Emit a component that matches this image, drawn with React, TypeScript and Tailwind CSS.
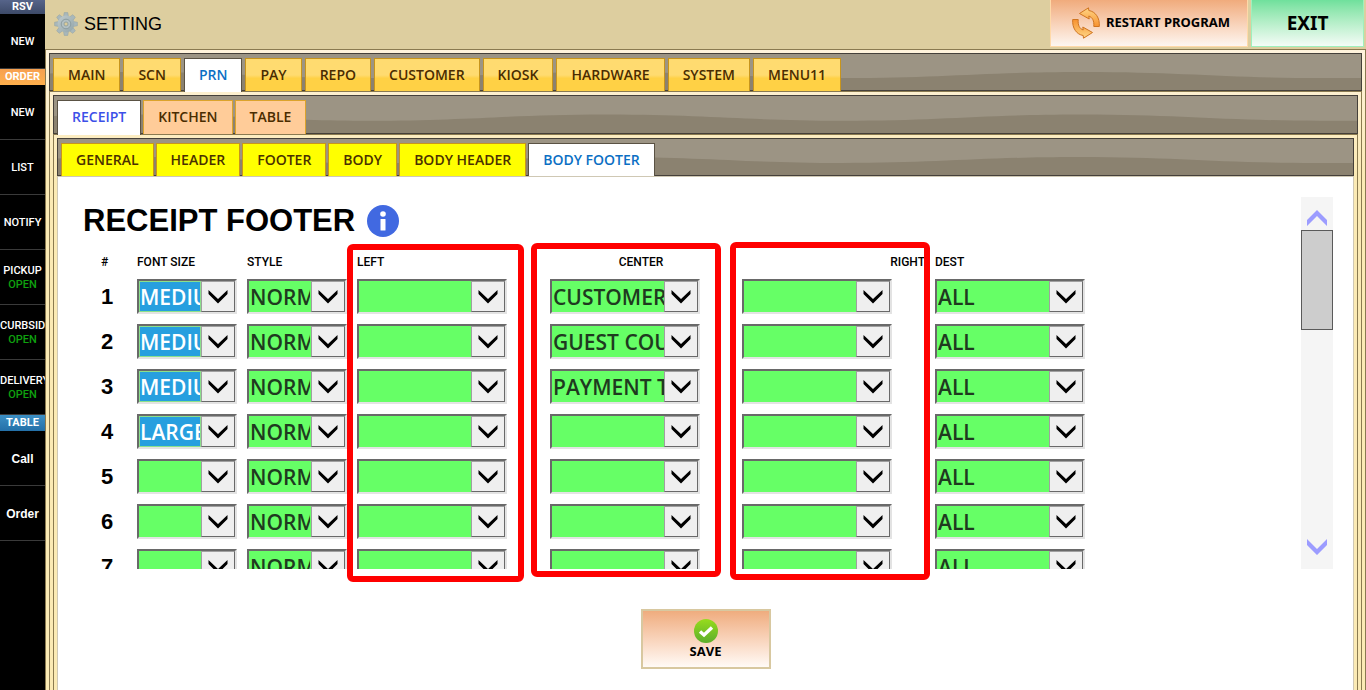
import React from 'react';

type Level = 'main' | 'sub' | 'leaf';

interface TabBarProps {
  level: Level;
  tabs: string[];
  active: string;
}

interface ComboProps {
  label: string;
  value?: string;
  wide?: boolean;
  selected?: boolean;
}

const mainTabs = ['MAIN', 'SCN', 'PRN', 'PAY', 'REPO', 'CUSTOMER', 'KIOSK', 'HARDWARE', 'SYSTEM', 'MENU11'];
const subTabs = ['RECEIPT', 'KITCHEN', 'TABLE'];
const leafTabs = ['GENERAL', 'HEADER', 'FOOTER', 'BODY', 'BODY HEADER', 'BODY FOOTER'];

const rows = [
  { size: 'MEDIUM', center: 'CUSTOMER' },
  { size: 'MEDIUM', center: 'GUEST COUNT' },
  { size: 'MEDIUM', center: 'PAYMENT TYPE' },
  { size: 'LARGE', center: '' },
  { size: '', center: '' },
  { size: '', center: '' },
  { size: '', center: '' },
];

const barStyles: Record<Level, string> = {
  main: 'h-[38px]',
  sub: 'h-[39px]',
  leaf: 'h-[38px]',
};

const gapStyles: Record<Level, string> = {
  main: 'gap-[3px]',
  sub: 'gap-0.5',
  leaf: 'gap-0.5',
};

const tabStyles: Record<Level, string> = {
  main: 'border-[#c8951c] bg-linear-to-b from-[#ffdb70] from-50% to-[#ffd145] to-60% text-[#4a2c00]',
  sub: 'border-[#dca32c] bg-[#ffcc99] pb-0.5 text-[#4a2c00]',
  leaf: 'border-[#c8951c] bg-[#ffff00] text-[#4a3000]',
};

const activeStyles: Record<Level, string> = {
  main: 'text-[#0b6fc4]',
  sub: 'text-[#3c50e8]',
  leaf: 'text-[#0b6fc4]',
};

const TabBar = ({ level, tabs, active }: TabBarProps) => (
  <div className={`relative flex border border-[#45403a] bg-[#9c9484] ${barStyles[level]}`}>
    <svg className="absolute inset-0 h-full w-full" viewBox="0 0 1305 36" preserveAspectRatio="none" aria-hidden="true">
      <path
        d="M-158 24 C-60 24 -20 18 79 18 C178 18 218 24 317 24 C416 24 455 18 554 18 C653 18 692 24 791 24 C890 24 930 18 1029 18 C1128 18 1168 24 1267 24 H1305 V36 H-158 Z"
        fill="#8b8270"
      />
    </svg>
    <div className={`relative mt-1 -mb-px flex pl-[3px] ${gapStyles[level]}`} role="tablist">
      {tabs.map((tab) => (
        <button
          key={tab}
          type="button"
          role="tab"
          aria-selected={tab === active}
          className={`border border-b-0 px-3.5 font-['Open_Sans',sans-serif] text-sm font-semibold ${tab === active ? `-mb-px border-[#5a5244] bg-white pb-0.5 ${activeStyles[level]}` : tabStyles[level]}`}
        >
          {tab}
        </button>
      ))}
    </div>
  </div>
);

const Combo = ({ label, value = '', wide, selected }: ComboProps) => (
  <div className={`relative h-[35px] border-2 border-t-[#696969] border-r-[#e3e3e3] border-b-[#e3e3e3] border-l-[#696969] bg-[#66ff66] ${wide ? 'w-[150px]' : 'w-[100px]'}`}>
    <select
      aria-label={label}
      defaultValue={value}
      className={`block h-full appearance-none overflow-hidden border pt-0.5 font-['Open_Sans',sans-serif] text-[21px] leading-[27px] font-semibold outline-none ${wide ? 'w-[113px]' : 'w-[62px]'} ${selected ? 'border-[#8be08b] bg-[#279fdf] text-white' : 'border-[#66ff66] bg-[#66ff66] text-[#1f3a1f]'}`}
    >
      <option value={value}>{value}</option>
    </select>
    <span className="pointer-events-none absolute inset-y-0 right-0 flex w-[34px] items-center justify-center border border-t-[#a0a0a0] border-r-[#696969] border-b-[#696969] border-l-[#a0a0a0] bg-[#efefef]">
      <svg width="20" height="16" viewBox="0 0 20 16" aria-hidden="true">
        <path d="M.5 1 L10 10 L19.500 1 V5 L10 14.500 L.5 5 Z" fill="#000" />
      </svg>
    </span>
  </div>
);

const GearIcon = () => (
  <svg width="24" height="24" viewBox="0 0 24 24" aria-hidden="true">
    <defs>
      <linearGradient id="gear" x1="0" y1="0" x2="1" y2="1">
        <stop offset="0" stopColor="#c0cbcd" />
        <stop offset="1" stopColor="#93a5a9" />
      </linearGradient>
    </defs>
    {[0, 45, 90, 135, 180, 225, 270, 315].map((angle) => (
      <path key={angle} d="M9.600 4.500 L10.200 .6 H13.800 L14.400 4.500 Z" fill="#a9b8bb" stroke="#8fa0a3" strokeWidth=".5" transform={`rotate(${angle} 12 12)`} />
    ))}
    <circle cx="12" cy="12" r="8.400" fill="url(#gear)" />
    <circle cx="12" cy="12" r="4.800" fill="#b3c0c2" stroke="#8c9da1" strokeWidth="1" />
    <circle cx="12" cy="12" r="2" fill="#dccc9a" stroke="#84969a" strokeWidth=".7" />
  </svg>
);

const RestartIcon = () => (
  <svg width="28" height="32" viewBox="0 0 28 32" aria-hidden="true">
    <defs>
      <linearGradient id="restart" x1="0" y1="0" x2="0" y2="1">
        <stop offset="0" stopColor="#ffd685" />
        <stop offset="1" stopColor="#f79230" />
      </linearGradient>
    </defs>
    <g fill="url(#restart)" stroke="#cf7420" strokeWidth="1" strokeLinejoin="round">
      <path d="M7.500 6.500 L16.500 .8 L16.800 3.500 C23.500 4.500 28 11 27.300 19.500 L21.800 19.500 C22.200 13.500 20.500 10.500 16.800 9 L17.200 12 Z" />
      <path d="M7.500 6.500 L16.500 .8 L16.800 3.500 C23.500 4.500 28 11 27.300 19.500 L21.800 19.500 C22.200 13.500 20.500 10.500 16.800 9 L17.200 12 Z" transform="rotate(180 14 16)" />
    </g>
  </svg>
);

const InfoIcon = () => (
  <svg width="32" height="32" viewBox="0 0 32 32" aria-hidden="true">
    <circle cx="16" cy="16" r="16" fill="#4169e1" />
    <circle cx="16" cy="9" r="2.800" fill="#fff" />
    <rect x="13.500" y="14" width="5" height="11.500" rx=".5" fill="#fff" />
  </svg>
);

const CheckIcon = () => (
  <svg width="24" height="24" viewBox="0 0 24 24" aria-hidden="true">
    <defs>
      <linearGradient id="check" x1="0" y1="0" x2="0" y2="1">
        <stop offset="0" stopColor="#97dc1c" />
        <stop offset="1" stopColor="#5cae2c" />
      </linearGradient>
    </defs>
    <circle cx="12" cy="12" r="12" fill="url(#check)" />
    <path d="M6 12.500 L10 16 L18 8.500" fill="none" stroke="#fff" strokeWidth="3.400" />
  </svg>
);

const SideItem = ({ label, open, large }: { label: string; open?: boolean; large?: boolean }) => (
  <button
    type="button"
    className={`flex h-[55px] w-full shrink-0 flex-col items-center-safe justify-center overflow-hidden border-b border-[#3a3a3a] pt-0.5 leading-[14px] whitespace-nowrap text-white ${large ? "font-['Liberation_Sans',sans-serif] text-xs font-bold" : 'text-[11px] font-medium'}`}
  >
    <span>{label}</span>
    {open && <span className="text-[#0fa00f]">OPEN</span>}
  </button>
);

const Sidebar = () => (
  <nav className="flex w-[45px] shrink-0 flex-col overflow-hidden bg-black font-['Roboto',sans-serif] text-[11px] font-bold text-white">
    <h2 className="h-3.5 bg-linear-to-b from-[#56648a] to-[#3d4a68] text-center leading-[14px]">RSV</h2>
    <SideItem label="NEW" />
    <h2 className="h-4 bg-linear-to-b from-[#f7a050] to-[#ffb04c] text-center leading-4">ORDER</h2>
    <SideItem label="NEW" />
    <SideItem label="LIST" />
    <SideItem label="NOTIFY" />
    <SideItem label="PICKUP" open />
    <SideItem label="CURBSIDE" open />
    <SideItem label="DELIVERY" open />
    <h2 className="h-4 bg-linear-to-b from-[#3c8fc4] to-[#2470a8] text-center leading-4">TABLE</h2>
    <SideItem label="Call" large />
    <SideItem label="Order" large />
  </nav>
);

const ReceiptTable = () => (
  <table className="table-fixed border-collapse text-left">
    <colgroup>
      <col className="w-[54px]" />
      <col className="w-[110px]" />
      <col className="w-[110px]" />
      <col className="w-[193px]" />
      <col className="w-[192px]" />
      <col className="w-[193px]" />
      <col className="w-[150px]" />
    </colgroup>
    <thead className="h-[34px] font-['Roboto',sans-serif] text-xs">
      <tr>
        <th className="pl-[18px] font-medium">#</th>
        <th className="font-medium">FONT SIZE</th>
        <th className="font-medium">STYLE</th>
        <th className="font-medium">LEFT</th>
        <th className="pr-2.5 text-center font-medium">CENTER</th>
        <th className="pr-2.5 text-right font-medium">RIGHT</th>
        <th className="font-medium">DEST</th>
      </tr>
    </thead>
    <tbody>
      {rows.map((row, i) => (
        <tr key={i} className="h-[45px] align-top">
          <th className="pl-[18px] text-[22px] leading-[36px] font-bold">{i + 1}</th>
          <td><Combo label={`Font size ${i + 1}`} value={row.size} selected={row.size !== ''} /></td>
          <td><Combo label={`Style ${i + 1}`} value="NORMAL" /></td>
          <td><Combo label={`Left ${i + 1}`} wide /></td>
          <td><Combo label={`Center ${i + 1}`} value={row.center} wide /></td>
          <td><Combo label={`Right ${i + 1}`} wide /></td>
          <td><Combo label={`Dest ${i + 1}`} value="ALL" wide /></td>
        </tr>
      ))}
    </tbody>
  </table>
);

const ScrollBar = () => (
  <div className="flex w-8 shrink-0 flex-col justify-between bg-[#f5f5f5]">
    <div>
      <button type="button" aria-label="Scroll up" className="flex h-[33px] w-full items-center justify-center pt-2">
        <svg width="20" height="16" viewBox="0 0 20 16" aria-hidden="true">
          <path d="M0 10 L10 0 L20 10 V16 L10 6 L0 16 Z" fill="#9c9cff" />
        </svg>
      </button>
      <div className="h-[100px] border border-[#5a5a5a] bg-[#cdcdcd]" />
    </div>
    <button type="button" aria-label="Scroll down" className="flex h-[33px] w-full items-center justify-center pb-3">
      <svg width="20" height="16" viewBox="0 0 20 16" aria-hidden="true">
        <path d="M0 0 L10 10 L20 0 V6 L10 16 L0 6 Z" fill="#9c9cff" />
      </svg>
    </button>
  </div>
);

const App = () => {
  return (
    <div className="flex h-screen overflow-hidden bg-[#ddce9f] font-['Liberation_Sans',Arial,sans-serif] text-black">
      <Sidebar />

      <div className="flex min-w-0 flex-1 flex-col">
        <header className="flex h-[49px] shrink-0 justify-between pr-0.5 pl-[9px]">
          <div className="flex items-center gap-1.5 pb-0.5">
            <GearIcon />
            <h1 className="text-lg">SETTING</h1>
          </div>
          <div className="flex items-start gap-[3px] font-['Noto_Sans',sans-serif] font-bold">
            <button type="button" className="flex h-[47px] w-[198px] items-center justify-center gap-1.5 border border-t-0 border-[#ffd9a8] bg-linear-to-b from-[#f0ab7c] to-[#fdf6f0] pl-1 text-[13px]">
              <RestartIcon />
              RESTART PROGRAM
            </button>
            <button type="button" className="h-[47px] w-[113px] border border-t-0 border-[#9ff0bd] bg-linear-to-b from-[#6fe09c] to-[#f4fcf7] text-[19px]">
              EXIT
            </button>
          </div>
        </header>

        <div className="flex flex-1 flex-col border border-b-0 border-[#8a7a50] bg-linear-to-b from-[#fff3dc] to-[#fbeab4] to-20% px-[3px] pt-[3px]">
          <TabBar level="main" tabs={mainTabs} active="PRN" />
          <div className="flex flex-1 flex-col border border-b-0 border-[#8a7a50] px-[3px] pt-[3px]">
            <TabBar level="sub" tabs={subTabs} active="RECEIPT" />
            <div className="flex flex-1 flex-col border border-b-0 border-[#8a7a50] px-[3px] pt-[3px]">
              <TabBar level="leaf" tabs={leafTabs} active="BODY FOOTER" />

              <main className="relative flex flex-1 flex-col items-center border border-b-0 border-[#cfc8b4] bg-white pt-5">
                <div className="flex h-[372px] w-full justify-between overflow-hidden pr-5 pl-[25px]">
                  <div>
                    <div className="flex h-12 items-center gap-3">
                      <h2 className="text-[31px] font-bold">RECEIPT FOOTER</h2>
                      <InfoIcon />
                    </div>
                    <ReceiptTable />
                  </div>
                  <ScrollBar />
                </div>

                <button type="button" className="mt-10 flex h-[60px] w-[130px] flex-col items-center justify-center border-2 border-[#d8c8a0] bg-linear-to-b from-[#efac7e] to-[#fffaf6] font-['Open_Sans',sans-serif] text-[13px] leading-4 font-bold">
                  <CheckIcon />
                  SAVE
                </button>

                {/* column highlights */}
                <div className="pointer-events-none absolute top-[67px] left-[289px] h-[338px] w-[177px] rounded-md border-6 border-[#ff0000]" />
                <div className="pointer-events-none absolute top-[66px] left-[473px] h-[334px] w-[190px] rounded-md border-6 border-[#ff0000]" />
                <div className="pointer-events-none absolute top-[65px] left-[672px] h-[338px] w-[200px] rounded-md border-6 border-[#ff0000]" />
              </main>
            </div>
          </div>
        </div>
      </div>
    </div>
  );
};

export default App;
